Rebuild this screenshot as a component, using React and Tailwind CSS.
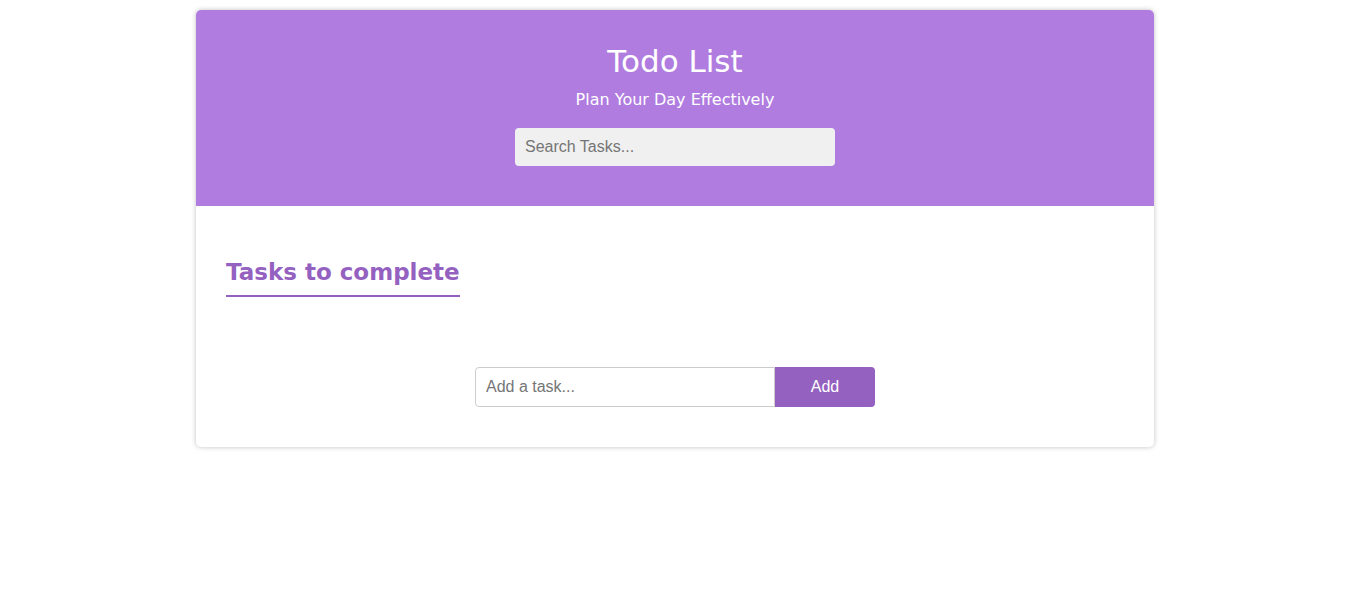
export default function App() {
  return (
    <div className="min-h-screen bg-white pr-[2px] pt-[10px]">
      <div className="mx-auto w-[958px] overflow-hidden rounded-[5px] bg-white shadow-[0_0_5px_rgba(0,0,0,0.25)]">
        <header className="flex flex-col items-center bg-[#b07ce0] pb-[40px] pt-[30px] text-white">
          <h1 className="font-['DejaVu_Sans',Verdana,sans-serif] text-[31px] leading-[42px]">
            Todo List
          </h1>
          <p className="mt-[6px] font-['DejaVu_Sans',Verdana,sans-serif] text-[16px] leading-[24px]">
            Plan Your Day Effectively
          </p>
          <input
            type="text"
            placeholder="Search Tasks..."
            className="mt-[16px] h-[38px] w-[320px] rounded-[4px] bg-[#f0f0f0] px-[10px] font-['Liberation_Sans',Arial,sans-serif] text-[16px] text-gray-700 outline-none placeholder:text-[#757575]"
          />
        </header>

        <main className="px-[30px] pb-[40px] pt-[50px]">
          <h2 className="inline-block border-b-2 border-[#9461c0] pb-[7px] font-['DejaVu_Sans',Verdana,sans-serif] text-[23px] font-bold leading-[32px] text-[#9461c0]">
            Tasks to complete
          </h2>

          <div className="mt-[70px] flex justify-center">
            <input
              type="text"
              placeholder="Add a task..."
              className="h-[40px] w-[300px] rounded-l-[4px] border border-[#cccccc] px-[10px] font-['Liberation_Sans',Arial,sans-serif] text-[16px] outline-none placeholder:text-[#757575]"
            />
            <button className="h-[40px] w-[100px] rounded-r-[4px] bg-[#9461c0] font-['Liberation_Sans',Arial,sans-serif] text-[16px] text-white">
              Add
            </button>
          </div>
        </main>
      </div>
    </div>
  );
}
